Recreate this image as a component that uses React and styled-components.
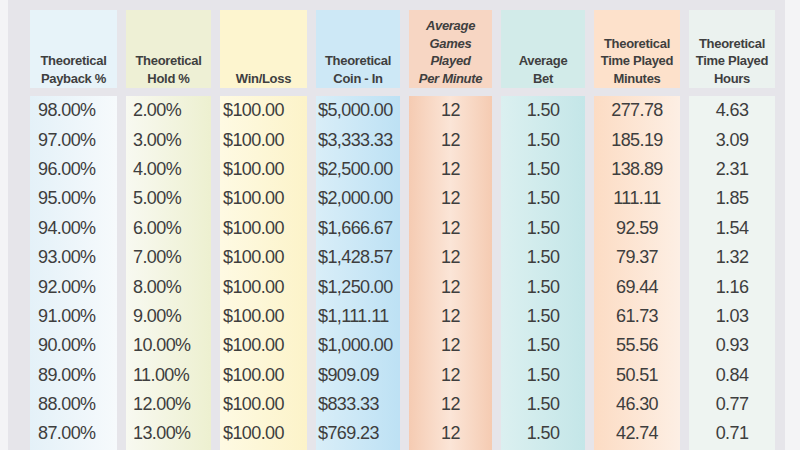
import React from "react";
import styled, { createGlobalStyle } from "styled-components";

const Global = createGlobalStyle`
  html, body { margin: 0; padding: 0; background: #ffffff; }
  body { width: 800px; height: 450px; overflow: hidden; }
`;

const Page = styled.div`
  width: 800px;
  height: 450px;
  background: #f4f4f6;
  padding-left: 8px;
  box-sizing: border-box;
  display: flex;
`;

const Panel = styled.div`
  width: 777px;
  height: 450px;
  background: #e6e5ea;
  box-sizing: border-box;
  padding: 10px 0 0 22px;
  display: flex;
  gap: 9px;
  overflow: hidden;
  font-family: "Liberation Sans", Arial, sans-serif;
`;

const Column = styled.div`
  width: ${(p) => p.$w}px;
  display: flex;
  flex-direction: column;
  gap: 8px;
  flex: none;
`;

const Header = styled.div`
  height: 78px;
  background: ${(p) => p.$bg};
  display: flex;
  align-items: flex-end;
  justify-content: center;
  padding-bottom: 1px;
  box-sizing: border-box;
  text-align: center;
  font-size: 13px;
  line-height: 17.5px;
  font-weight: bold;
  font-style: ${(p) => (p.$italic ? "italic" : "normal")};
  letter-spacing: -0.3px;
  color: #3f3f3f;
  white-space: pre-line;
`;

const Body = styled.div`
  flex: 1;
  background: ${(p) => p.$bg};
  display: flex;
  flex-direction: column;
`;

const Cell = styled.div`
  height: 29.4px;
  flex: none;
  display: flex;
  align-items: center;
  justify-content: ${(p) => (p.$center ? "center" : "flex-start")};
  padding-left: ${(p) => p.$pad}px;
  font-size: 18px;
  letter-spacing: -0.6px;
  color: #3e3e3e;
  white-space: nowrap;
`;

const rows = [
  ["98.00%", "2.00%", "$100.00", "$5,000.00", "12", "1.50", "277.78", "4.63"],
  ["97.00%", "3.00%", "$100.00", "$3,333.33", "12", "1.50", "185.19", "3.09"],
  ["96.00%", "4.00%", "$100.00", "$2,500.00", "12", "1.50", "138.89", "2.31"],
  ["95.00%", "5.00%", "$100.00", "$2,000.00", "12", "1.50", "111.11", "1.85"],
  ["94.00%", "6.00%", "$100.00", "$1,666.67", "12", "1.50", "92.59", "1.54"],
  ["93.00%", "7.00%", "$100.00", "$1,428.57", "12", "1.50", "79.37", "1.32"],
  ["92.00%", "8.00%", "$100.00", "$1,250.00", "12", "1.50", "69.44", "1.16"],
  ["91.00%", "9.00%", "$100.00", "$1,111.11", "12", "1.50", "61.73", "1.03"],
  ["90.00%", "10.00%", "$100.00", "$1,000.00", "12", "1.50", "55.56", "0.93"],
  ["89.00%", "11.00%", "$100.00", "$909.09", "12", "1.50", "50.51", "0.84"],
  ["88.00%", "12.00%", "$100.00", "$833.33", "12", "1.50", "46.30", "0.77"],
  ["87.00%", "13.00%", "$100.00", "$769.23", "12", "1.50", "42.74", "0.71"],
];

const columns = [
  { w: 87, title: "Theoretical\nPayback %", head: "#e7f3f9", body: "linear-gradient(to right, #e4f1f8, #f6fafc)", pad: 8 },
  { w: 85, title: "Theoretical\nHold %", head: "#eef0d5", body: "linear-gradient(to right, #f8f9f1, #edf0d0)", pad: 7 },
  { w: 87, title: "Win/Loss", head: "#fdf5cf", body: "linear-gradient(to right, #fefae3, #fcf3c9)", pad: 3 },
  { w: 84, title: "Theoretical\nCoin - In", head: "#cde8f6", body: "linear-gradient(to right, #d9eef8, #bde1f4)", pad: 2 },
  { w: 83, title: "Average\nGames\nPlayed\nPer Minute", head: "#f7d6c3", body: "linear-gradient(to right, #f5cbb2, #fbe5d7 50%, #f5cbb2)", center: true, italic: true },
  { w: 84, title: "Average\nBet", head: "#d2ebe9", body: "linear-gradient(to right, #dbf0f0, #c4e6e8)", center: true },
  { w: 86, title: "Theoretical\nTime Played\nMinutes", head: "#fde1cb", body: "linear-gradient(to right, #fcdcc4, #fdefe4)", center: true },
  { w: 86, title: "Theoretical\nTime Played\nHours", head: "#ebf2ef", body: "#eef4f1", center: true },
];

export default function App() {
  return (
    <Page>
      <Global />
      <Panel>
        {columns.map((c, ci) => (
          <Column key={ci} $w={c.w}>
            <Header $bg={c.head} $italic={c.italic}>{c.title}</Header>
            <Body $bg={c.body}>
              {rows.map((r, ri) => (
                <Cell key={ri} $center={c.center} $pad={c.center ? 0 : c.pad}>
                  {r[ci]}
                </Cell>
              ))}
            </Body>
          </Column>
        ))}
      </Panel>
    </Page>
  );
}
